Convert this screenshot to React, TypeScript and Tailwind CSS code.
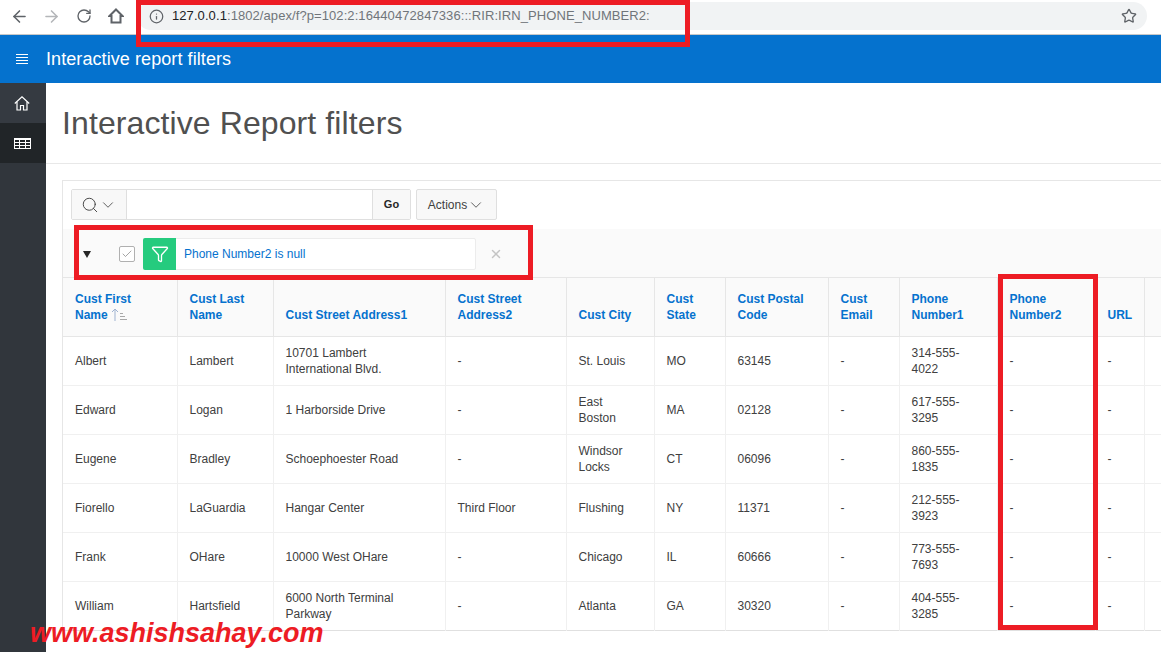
import { ArrowLeft, ArrowRight, Check, ChevronDown, Filter, Info, RotateCw, Search, Star, X } from 'lucide-react'

const COLUMNS = [
  { label: ['Cust First', 'Name'], width: 'w-[114px]', sorted: true },
  { label: ['Cust Last', 'Name'], width: 'w-[96px]' },
  { label: ['Cust Street Address1'], width: 'w-[172px]' },
  { label: ['Cust Street', 'Address2'], width: 'w-[121px]' },
  { label: ['Cust City'], width: 'w-[88px]' },
  { label: ['Cust', 'State'], width: 'w-[71px]' },
  { label: ['Cust Postal', 'Code'], width: 'w-[103px]' },
  { label: ['Cust', 'Email'], width: 'w-[71px]' },
  { label: ['Phone', 'Number1'], width: 'w-[98px]' },
  { label: ['Phone', 'Number2'], width: 'w-[98px]' },
  { label: ['URL'], width: 'w-[49px]' },
  { label: [''], width: 'w-[119px]' },
]

const ROWS = [
  ['Albert', 'Lambert', '10701 Lambert International Blvd.', '-', 'St. Louis', 'MO', '63145', '-', '314-555-4022', '-', '-', ''],
  ['Edward', 'Logan', '1 Harborside Drive', '-', 'East Boston', 'MA', '02128', '-', '617-555-3295', '-', '-', ''],
  ['Eugene', 'Bradley', 'Schoephoester Road', '-', 'Windsor Locks', 'CT', '06096', '-', '860-555-1835', '-', '-', ''],
  ['Fiorello', 'LaGuardia', 'Hangar Center', 'Third Floor', 'Flushing', 'NY', '11371', '-', '212-555-3923', '-', '-', ''],
  ['Frank', 'OHare', '10000 West OHare', '-', 'Chicago', 'IL', '60666', '-', '773-555-7693', '-', '-', ''],
  ['William', 'Hartsfield', '6000 North Terminal Parkway', '-', 'Atlanta', 'GA', '30320', '-', '404-555-3285', '-', '-', ''],
]

function ChromeHome() {
  return (
    <svg width="16" height="16" viewBox="0 0 16 16" fill="none" stroke="#5f6368" strokeWidth="2" className="ml-[16px]">
      <path d="M8 1.5L14.5 8H12.5V14.5H3.5V8H1.5Z" />
    </svg>
  )
}

function Hamburger() {
  return (
    <svg width="12" height="10" viewBox="0 0 12 10" fill="none" stroke="white" className="ml-4">
      <path d="M0 0.5h12M0 3.5h12M0 6.5h12M0 9.5h12" />
    </svg>
  )
}

function NavHome() {
  return (
    <svg width="16" height="15" viewBox="0 0 16 15" fill="none" stroke="white" strokeWidth="1.2">
      <path d="M0.8 7.5L8 0.8L15.2 7.5" />
      <path d="M3 5.8V14H6.5V9.5H9.5V14H13V5.8" />
    </svg>
  )
}

function TableIcon() {
  return (
    <svg width="17" height="11" viewBox="0 0 17 11" fill="none" stroke="white">
      <rect x="0.5" y="0.5" width="16" height="10" />
      <path d="M0 1.5h17M0 4.5h17M0 7.5h17M5.5 0v11M11.5 0v11" />
    </svg>
  )
}

function SortIcon() {
  return (
    <svg width="16" height="13" viewBox="0 0 16 13" fill="none" stroke="#9fb3d1" className="ml-[3px] inline-block align-[-2px]">
      <path d="M4 13V1M1 4l3-3 3 3" />
      <path d="M9 5.5h3M9 8.5h5M9 11.5h7" stroke="#a8a8a8" />
    </svg>
  )
}

export default function App() {
  return (
    <div className="relative flex h-screen w-full flex-col overflow-hidden bg-white font-['Liberation_Sans',sans-serif] text-xs text-[#404040]">
      {/* browser chrome */}
      <div className="flex h-[35px] shrink-0 items-center border-b border-[#c8c8c8] bg-white pb-[2px]">
        <div className="flex w-[137px] items-center pl-[10px]">
          <ArrowLeft size={19} strokeWidth={2} className="text-[#5f6368]" />
          <ArrowRight size={19} strokeWidth={2} className="ml-[13px] text-[#b4b6b9]" />
          <RotateCw size={16} strokeWidth={2} className="ml-[15px] text-[#5f6368]" />
          <ChromeHome />
        </div>
        <div className="flex h-7 w-[1010px] items-center rounded-[14px] bg-[#f1f3f4] pl-[12px] pr-[10px]">
          <Info size={15} strokeWidth={2} className="text-[#5f6368]" />
          <span className="ml-[8px] text-[13px] tracking-[0.08px] text-[#70757a]">
            <span className="text-[#202124]">127.0.0.1</span>:1802/apex/f?p=102:2:16440472847336:::RIR:IRN_PHONE_NUMBER2:
          </span>
          <Star size={16} strokeWidth={2} className="ml-auto text-[#5f6368]" />
        </div>
      </div>

      {/* app header */}
      <header className="flex h-12 shrink-0 items-center bg-[#0572ce] text-white">
        <Hamburger />
        <span className="ml-[18px] text-[18px] tracking-[0.08px]">Interactive report filters</span>
      </header>

      <div className="flex min-h-0 flex-1">
        <nav className="w-[46px] shrink-0 bg-[#31363c]">
          <div className="flex h-10 items-center justify-center bg-[#353a41] pr-[2px]">
            <NavHome />
          </div>
          <div className="flex h-10 items-center justify-center bg-[#212528] pr-[2px]">
            <TableIcon />
          </div>
        </nav>

        <main className="min-w-0 flex-1 overflow-hidden">
          <div className="flex h-[81px] items-center border-b border-[#e8e8e8] pl-4">
            <h1 className="text-[32px] font-normal leading-none tracking-[0.1px] text-[#505050]">Interactive Report filters</h1>
          </div>

          <section className="ml-4 mt-4 w-[1200px] border border-b-0 border-[#e6e6e6] pb-0">
            <div className="flex h-[48px] items-start bg-white pl-2 pt-2">
              <div className="flex h-[31px] w-[340px] rounded-[2px] border border-[#dfdfdf]">
                <div className="flex w-[55px] items-center justify-center border-r border-[#dfdfdf] bg-[#f8f8f8]">
                  <Search size={18} strokeWidth={1.25} className="text-[#404040]" />
                  <ChevronDown size={18} strokeWidth={1.1} className="text-[#404040]" />
                </div>
                <div className="flex-1 bg-white" />
                <div className="flex w-[38px] items-center justify-center border-l border-[#dfdfdf] bg-[#f8f8f8] text-[11px] font-bold text-[#262626]">
                  Go
                </div>
              </div>
              <div className="ml-[5px] flex h-[31px] w-[81px] items-center justify-center rounded-[2px] border border-[#dfdfdf] bg-[#f8f8f8] text-[#404040]">
                Actions
                <ChevronDown size={18} strokeWidth={1.1} />
              </div>
            </div>

            <div className="flex h-[49px] items-center border-b border-[#e6e6e6] bg-[#fafafa] pt-[2px]">
              <span className="ml-5 h-0 w-0 border-x-[4px] border-t-[7px] border-x-transparent border-t-[#262626]" />
              <span className="ml-[28px] flex h-4 w-4 items-center justify-center rounded-[2px] border border-[#b0b0b0] bg-white">
                <Check size={12} strokeWidth={1.25} className="text-[#707070]" />
              </span>
              <div className="ml-2 flex h-8 w-[333px] rounded-[2px] border border-[#ececec] bg-white">
                <span className="-my-px -ml-px flex w-[33px] items-center justify-center rounded-l-[2px] bg-[#25cb7e]">
                  <Filter size={18} strokeWidth={1.75} className="text-white" />
                </span>
                <span className="ml-2 self-center text-[#0572ce]">Phone Number2 is null</span>
              </div>
              <X size={14} strokeWidth={2.5} className="ml-[13px] text-[#c4c4c4]" />
            </div>

            <table className="w-[1200px] table-fixed border-collapse">
              <thead>
                <tr className="h-[58px] border-b border-[#e6e6e6] bg-[#fafafa]">
                  {COLUMNS.map((col, i) => (
                    <th
                      key={i}
                      className={`${col.width} border-r border-[#e6e6e6] px-3 pb-[13px] text-left align-bottom text-xs font-bold leading-4 text-[#0572ce]`}
                    >
                      {col.label.map((line, j) => (
                        <div key={j} className="whitespace-nowrap">
                          {line}
                          {col.sorted && j === 1 ? <SortIcon /> : null}
                        </div>
                      ))}
                    </th>
                  ))}
                </tr>
              </thead>
              <tbody>
                {ROWS.map((row, i) => (
                  <tr key={i} className="h-[49px] border-b border-[#f0f0f0] last:border-[#e0e0e0]">
                    {row.map((cell, j) => (
                      <td key={j} className="border-r border-[#f0f0f0] px-3 text-xs leading-4 text-[#404040]">
                        {cell}
                      </td>
                    ))}
                  </tr>
                ))}
              </tbody>
            </table>
          </section>
        </main>
      </div>

      {/* annotations painted over the screenshot */}
      <div className="absolute left-[136px] top-0 h-[47px] w-[554px] border-[5px] border-[#ed1c24]" />
      <div className="absolute left-[74px] top-[225px] h-[55px] w-[459px] border-[5px] border-[#ed1c24]" />
      <div className="absolute left-[998px] top-[274px] h-[356px] w-[100px] border-[5px] border-[#ed1c24]" />
      <div className="absolute left-[30px] top-[617px] text-[27px] font-bold italic leading-8 text-[#ed1c24]">
        www.ashishsahay.com
      </div>
    </div>
  )
}
